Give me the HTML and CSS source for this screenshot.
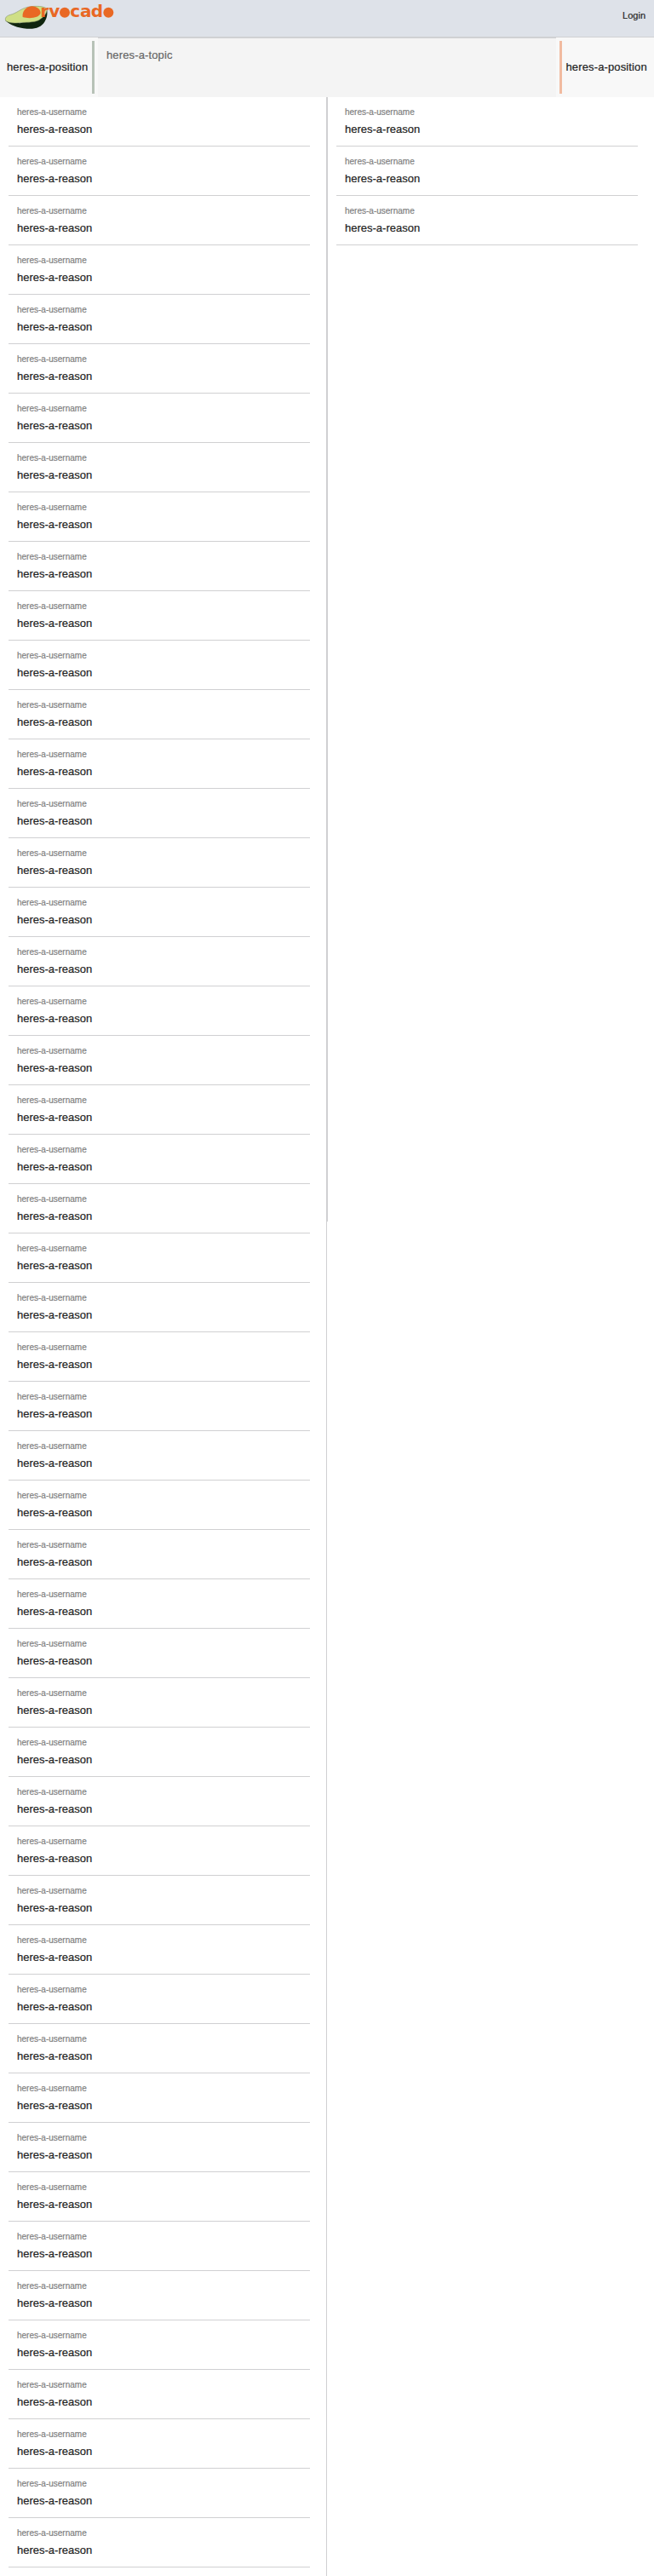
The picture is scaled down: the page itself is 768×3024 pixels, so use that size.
FILE: index.html
```html
<!DOCTYPE html>
<html lang="en">
<head>
<meta charset="utf-8">
<title>Arvocado</title>
<link rel="stylesheet" href="styles.css">
</head>
<body>
<header class="navbar">
  <svg class="logo" width="140" height="36" viewBox="0 0 420 108" role="img" aria-label="arvocado">
    <path fill="#10250f" d="M19 72C36 88 61 99 95 101C127 103 145 95 157 77C166 63 169 46 164 31L147 59L70 82Z"/>
    <path fill="#cfdf86" stroke="#74845c" stroke-width="1.5" d="M20 73C15 58 29 54 43 50C64 43 77 27 108 23C139 20 163 24 165 33C167 46 153 61 137 71C117 80 89 78 68 80C46 83 28 80 20 73Z"/>
    <path fill="#e96824" d="M80 60C77 43 90 23 112 22C130 22 143 33 143 46C139 64 101 67 80 60Z"/>
    <g class="wordmark">
      <text x="142" y="61">r</text><text x="172" y="61">v</text><text x="247" y="61">c</text><text x="282" y="61">a</text><text x="320" y="61">d</text>
    </g>
    <circle cx="228" cy="44" r="18" fill="#e96824"/>
    <circle cx="382" cy="44" r="18" fill="#e96824"/>
  </svg>
  <a class="login">Login</a>
</header>
<section class="debate">
  <div class="position position-for"><span>heres-a-position</span></div>
  <div class="topic">heres-a-topic</div>
  <div class="position position-against"><span>heres-a-position</span></div>
</section>
<main class="columns">
  <div class="column column-for" data-count="50"></div>
  <div class="column column-against" data-count="3"></div>
</main>
<script src="reasons.js"></script>
</body>
</html>
```
FILE: styles.css
```css
* { box-sizing: border-box; }
body {
  margin: 0;
  background: #fff;
  color: #222;
  font-family: "Liberation Sans", Arial, sans-serif;
  font-size: 13px;
  -webkit-text-stroke: 0.2px currentColor;
}
.navbar {
  display: flex;
  justify-content: space-between;
  height: 44px;
  background: #dee2e9;
  border-bottom: 1px solid #d0d1d3;
}
.logo { display: block; -webkit-text-stroke: 0; }
.wordmark {
  fill: #e96824;
  font-family: "DejaVu Sans", sans-serif;
  font-size: 60px;
  font-weight: bold;
}
.login {
  padding: 12px 10px 0 0;
  font-size: 11px;
  line-height: 13px;
}
.debate { display: flex; height: 70px; letter-spacing: 0.13px; }
.position {
  display: flex;
  width: 115px;
  padding: 4px;
  background: #f8f8f8;
}
.position span {
  display: flex;
  align-items: center;
  flex: 1;
  height: 62px;
  padding-bottom: 1px;
}
.position-for span {
  padding-left: 4px;
  border-right: 3px solid #b7c2b7;
}
.position-against span {
  padding-left: 4.5px;
  border-left: 3px solid #f1bba0;
}
.topic {
  flex: 1;
  padding: 12px 10px;
  border-top: 1px solid #d0d1d3;
  background: #f4f4f4;
  color: #666;
  line-height: 16px;
}
.columns {
  display: flex;
  align-items: flex-start;
  height: 2910px;
  overflow: hidden;
}
.column { width: 384px; padding: 0 19px 0 10px; }
.column-for { height: 2910px; border-right: 1px solid #d0d0d2; }
.column-against { height: 1320px; border-left: 1px solid #d0d0d2; }
.reason {
  height: 58px;
  padding: 12px 10px 0;
  border-bottom: 1px solid #d0d0d2;
}
.username { color: #808080; font-size: 10px; line-height: 12px; }
.text { margin-top: 6px; line-height: 16px; }
```
FILE: reasons.js
```js
document.querySelectorAll('.column').forEach(function (column) {
  for (var i = 0; i < Number(column.dataset.count); i++) {
    var reason = document.createElement('article');
    reason.className = 'reason';
    reason.innerHTML = '<div class="username">heres-a-username</div><div class="text">heres-a-reason</div>';
    column.appendChild(reason);
  }
});
```
